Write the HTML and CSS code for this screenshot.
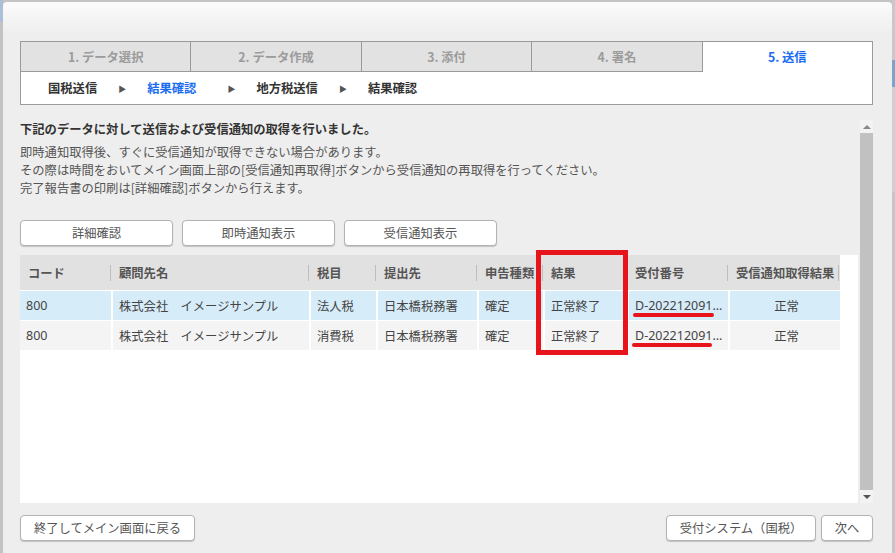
FILE: index.html
```html
<!DOCTYPE html>
<html lang="ja">
<head>
<meta charset="utf-8">
<title>送信</title>
<link rel="stylesheet" href="styles.css">
</head>
<body>
<div class="edge edge-left"></div>
<div class="dialog">
  <div class="steps">
    <div class="tabs">
      <div class="tab">1. データ選択</div>
      <div class="tab">2. データ作成</div>
      <div class="tab">3. 添付</div>
      <div class="tab">4. 署名</div>
      <div class="tab active">5. 送信</div>
    </div>
    <div class="substeps">
      <span class="sub">国税送信</span><span class="arrow">&#9654;</span>
      <span class="sub current">結果確認</span><span class="arrow">&#9654;</span>
      <span class="sub">地方税送信</span><span class="arrow">&#9654;</span>
      <span class="sub">結果確認</span>
    </div>
  </div>

  <div class="scrollarea">
    <div class="content">
      <p class="lead">下記のデータに対して送信および受信通知の取得を行いました。</p>
      <p class="note">即時通知取得後、すぐに受信通知が取得できない場合があります。<br>その際は時間をおいてメイン画面上部の[受信通知再取得]ボタンから受信通知の再取得を行ってください。<br>完了報告書の印刷は[詳細確認]ボタンから行えます。</p>
      <div class="actions">
        <button class="btn btn-action">詳細確認</button>
        <button class="btn btn-action">即時通知表示</button>
        <button class="btn btn-action">受信通知表示</button>
      </div>
      <div class="grid">
        <table class="table">
          <colgroup>
            <col class="c1"><col class="c2"><col class="c3"><col class="c4">
            <col class="c5"><col class="c6"><col class="c7"><col class="c8">
          </colgroup>
          <thead>
            <tr>
              <th>コード</th><th>顧問先名</th><th>税目</th><th>提出先</th>
              <th>申告種類</th><th>結果</th><th>受付番号</th><th>受信通知取得結果</th>
            </tr>
          </thead>
          <tbody>
            <tr class="selected">
              <td class="latin">800</td><td>株式会社　イメージサンプル</td><td>法人税</td><td>日本橋税務署</td>
              <td>確定</td><td>正常終了</td><td class="latin">D-20221209123456</td><td class="center">正常</td>
            </tr>
            <tr>
              <td class="latin">800</td><td>株式会社　イメージサンプル</td><td>消費税</td><td>日本橋税務署</td>
              <td>確定</td><td>正常終了</td><td class="latin">D-20221209123457</td><td class="center">正常</td>
            </tr>
          </tbody>
        </table>
        <div class="mark-box"></div>
        <div class="mark-line mark-line-1"></div>
        <div class="mark-line mark-line-2"></div>
      </div>
    </div>
    <div class="scrollbar">
      <div class="sb-btn"><span class="tri-up"></span></div>
      <div class="sb-thumb"></div>
      <div class="sb-btn"><span class="tri-down"></span></div>
    </div>
  </div>

  <div class="footer">
    <button class="btn btn-back">終了してメイン画面に戻る</button>
    <div class="footer-right">
      <button class="btn btn-system">受付システム（国税）</button>
      <button class="btn btn-next">次へ</button>
    </div>
  </div>
</div>
<div class="edge edge-right"></div>
</body>
</html>
```

FILE: styles.css
```css
* { box-sizing: border-box; }

html, body {
  margin: 0;
  padding: 0;
}

body {
  width: 895px;
  height: 553px;
  overflow: hidden;
  display: flex;
  background: #c4c4c4;
  font-family: "Noto Sans CJK JP", "Noto Sans", sans-serif;
  font-size: 12.3px;
  color: #555;
}

.edge {
  width: 3px;
  flex: none;
  height: 553px;
}

.edge-left {
  background: linear-gradient(#a9c0d8 0, #a9c0d8 22px, #c3c3c3 22px);
}

.edge-right {
  background: linear-gradient(#c9c9c9 0, #c9c9c9 60px, #7fa3c8 60px, #7fa3c8 87px, #cfcfcf 87px, #cfcfcf 192px, #c6c6c6 192px);
}

.dialog {
  width: 889px;
  height: 551px;
  margin-top: 2px;
  flex: none;
  border-radius: 4px 4px 0 0;
  background: linear-gradient(#fbfbfb 0, #eeeeee 32px, #eeeeee 100%);
  padding: 39px 19px 0 17px;
  display: flex;
  flex-direction: column;
}

/* ---------- steps ---------- */
.steps {
  border: 1px solid #9a9a9a;
  background: #fff;
  height: 64px;
}

.tabs {
  display: flex;
  height: 30px;
}

.tab {
  flex: 1;
  display: flex;
  align-items: center;
  justify-content: center;
  background: #e2e2e2;
  color: #9b9b9b;
  font-weight: bold;
  font-size: 12.3px;
  border-right: 1px solid #9a9a9a;
  border-bottom: 1px solid #9a9a9a;
}

.tab.active {
  background: #fff;
  color: #1a6cf2;
  border-right: none;
  border-bottom: none;
}

.substeps {
  height: 32px;
  display: flex;
  align-items: center;
  padding-left: 27px;
  gap: 21px;
  font-weight: bold;
  color: #333;
  font-size: 12.3px;
}

.sub.current {
  color: #1a6cf2;
  margin-right: 10px;
}

.arrow {
  font-size: 8px;
  color: #555;
}

/* ---------- scroll area ---------- */
.scrollarea {
  margin-top: 15px;
  height: 383px;
  display: flex;
  gap: 2px;
}

.content {
  flex: 1;
  display: flex;
  flex-direction: column;
}

.lead {
  margin: 0 0 5px 0;
  line-height: 18px;
  font-weight: bold;
  color: #333;
}

.note {
  margin: 0;
  line-height: 18px;
  color: #555;
}

.actions {
  margin-top: 23px;
  display: flex;
  gap: 9px;
}

.btn {
  font-family: inherit;
  font-size: 12.3px;
  color: #555;
  background: #fff;
  border: 1px solid #b3b3b3;
  border-radius: 4px;
  box-shadow: 0 1px 1px rgba(0, 0, 0, 0.18);
  padding: 0;
  height: 26px;
  line-height: 24px;
}

.btn-action {
  width: 153px;
}

.grid {
  position: relative;
  margin-top: 9px;
  flex: 1;
  background: #fff;
}

.table {
  table-layout: fixed;
  border-collapse: separate;
  border-spacing: 0;
  width: 820px;
  font-size: 12.3px;
}

.c1 { width: 91px; }
.c2 { width: 198px; }
.c3 { width: 67px; }
.c4 { width: 101px; }
.c5 { width: 66px; }
.c6 { width: 84px; }
.c7 { width: 101px; }
.c8 { width: 112px; }

.table th {
  position: relative;
  height: 35px;
  background: #e1e1e1;
  color: #555;
  font-weight: bold;
  text-align: left;
  padding: 0 0 0 8px;
  white-space: nowrap;
  overflow: hidden;
}

.table th::after {
  content: "";
  position: absolute;
  right: 0;
  top: 10px;
  width: 1px;
  height: 16px;
  background: #bdbdbd;
}

.table th:last-child::after {
  right: 1px;
}

.table td {
  height: 30px;
  background: #f4f4f4;
  color: #444;
  padding: 0 3px 0 6px;
  border-top: 1px solid #fff;
  border-left: 2px solid #fff;
  white-space: nowrap;
  overflow: hidden;
  text-overflow: ellipsis;
}

.table td:first-child {
  border-left: none;
}

.table td.latin {
  font-family: "Noto Sans", "Noto Sans CJK JP", sans-serif;
  font-size: 12.5px;
}

.table tr.selected td {
  background: #d7ecf9;
}

.table td.center {
  text-align: center;
}

.mark-box {
  position: absolute;
  left: 516px;
  top: -5px;
  width: 92px;
  height: 105px;
  border: 5px solid #e8141c;
}

.mark-line {
  position: absolute;
  height: 4px;
  border-radius: 2px;
  background: #e8141c;
}

.mark-line-1 {
  left: 613px;
  top: 58px;
  width: 81px;
}

.mark-line-2 {
  left: 612px;
  top: 88px;
  width: 80px;
}

/* ---------- scrollbar ---------- */
.scrollbar {
  width: 13px;
  display: flex;
  flex-direction: column;
}

.sb-btn {
  height: 13px;
  background: #f3f3f3;
  display: flex;
  align-items: center;
  justify-content: center;
}

.sb-thumb {
  flex: 1;
  background: #c1c1c1;
}

.tri-up {
  width: 0;
  height: 0;
  border-left: 4px solid transparent;
  border-right: 4px solid transparent;
  border-bottom: 4px solid #888;
}

.tri-down {
  width: 0;
  height: 0;
  border-left: 4px solid transparent;
  border-right: 4px solid transparent;
  border-top: 4px solid #555;
}

/* ---------- footer ---------- */
.footer {
  margin-top: 12px;
  display: flex;
  justify-content: space-between;
}

.footer-right {
  display: flex;
  gap: 5px;
}

.btn-back {
  width: 175px;
}

.btn-system {
  width: 150px;
}

.btn-next {
  width: 52px;
}
```
